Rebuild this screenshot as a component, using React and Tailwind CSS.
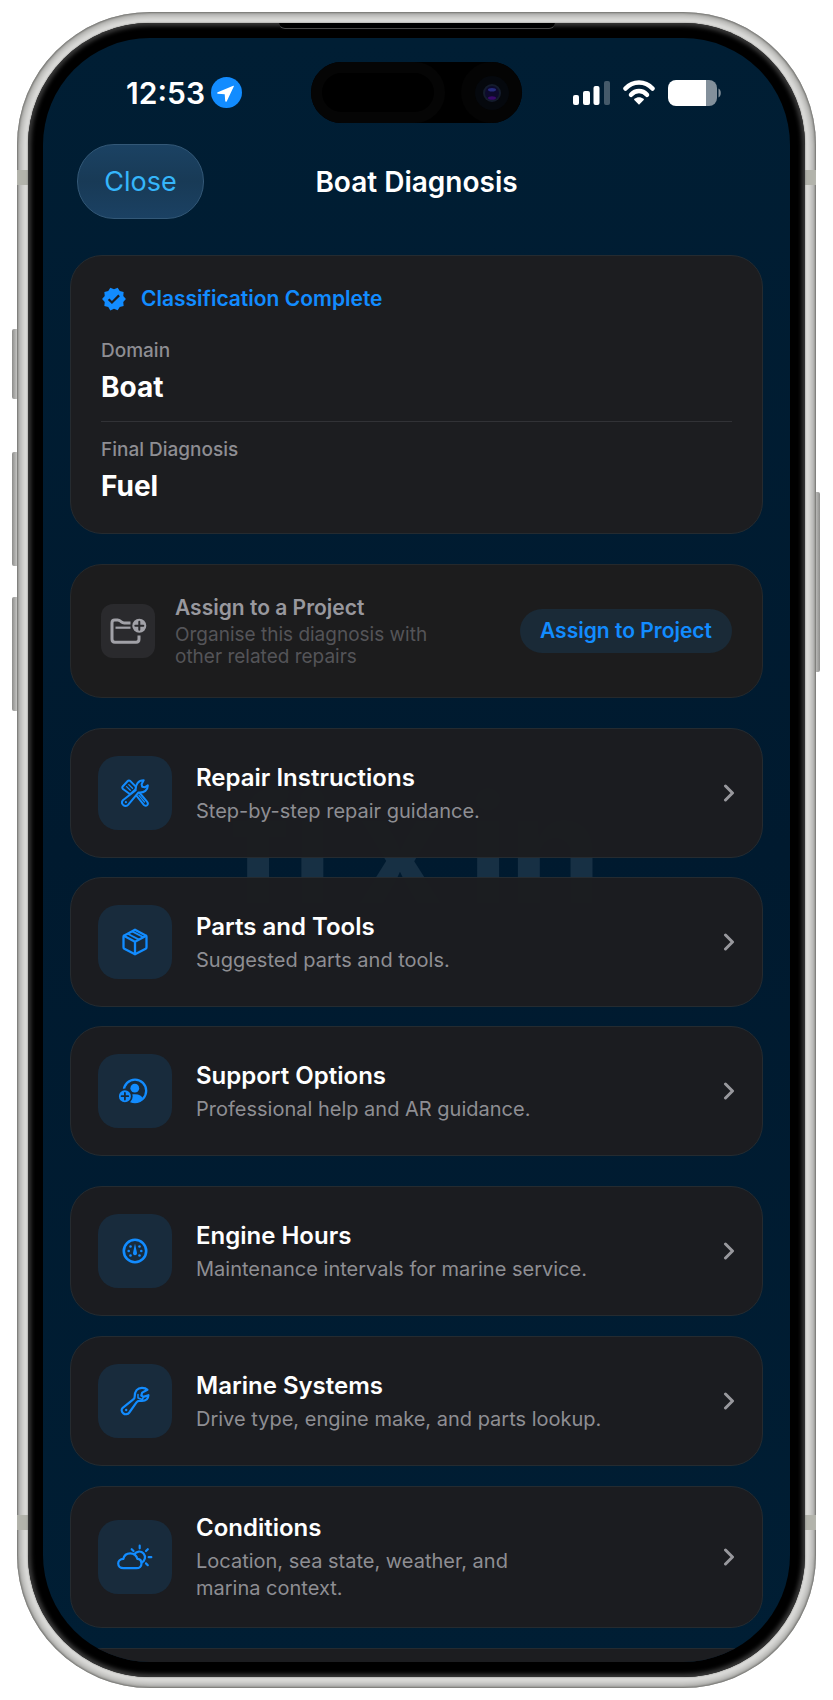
import React from "react";
import { MdVerified } from "react-icons/md";

const FolderPlusIcon = () => (
  <svg width="38" height="28" viewBox="0 0 38 28" fill="none">
    <path
      d="M21.5 6H15.2c-1.2 0-2-.3-2.9-1.1l-1-.9c-.8-.8-1.5-1.1-2.7-1.1H5.8C3.9 2.9 3 3.9 3 5.7V22.3c0 1.9 1 2.9 2.9 2.9H27.1c1.9 0 2.9-1 2.9-2.9V18.5"
      stroke="#a1a1a7"
      strokeWidth="3"
    />
    <path d="M6.5 10.7H21.5" stroke="#a1a1a7" strokeWidth="2.2" />
    <circle cx="30.3" cy="8.7" r="7" fill="#a1a1a7" />
    <path
      d="M30.3 4.700v8M26.300 8.700h8"
      stroke="#2a2a2d"
      strokeWidth="2"
      strokeLinecap="round"
    />
  </svg>
);

const RepairIcon = () => (
  <svg
    width="28"
    height="28"
    viewBox="0 0 28 28"
    fill="none"
    stroke="#128cff"
    strokeWidth="2"
    strokeLinecap="round"
    strokeLinejoin="round"
  >
    {/* Screwdriver */}
    <path d="M14.5 15.5 17.5 12.5 26 22.6c1.1 1.3 1 2.6.2 3.5-.9.9-2.4.9-3.400-.2Z" />
    <path d="M17.8 16.2 23.5 23" strokeWidth="1.200" />
    <path d="M1.9 7.2 6.5 2.2c.8-.9 2-.9 2.9-.1l5.2 5.3c.9.9.9 1.8.1 2.7L10.300 14.300c-.8.8-1.800.8-2.600 0L2 10c-.9-.9-.9-1.900-.1-2.800Z" />
    <path d="M5.6 7.6 9.3 11.2M7.8 5.6 11.5 9.2" strokeWidth="1.300" />
    {/* Wrench */}
    <path
      fill="#182b3c"
      d="M1.9 21.3 14.7 11.3C14.3 5.5 17.3 1.3 22.7 1.3L20.6 5.2 21.2 7.7 23.7 8.3 26.8 6.3C27.1 11 23.2 14 17.5 13.4L7.3 25.7C5.900 27.300 3.700 27.300 2.200 25.900.8 24.500.6 22.600 1.900 21.300Z"
    />
    <circle cx="4.900" cy="23.200" r="1.100" fill="#128cff" stroke="none" />
  </svg>
);

const BoxIcon = () => (
  <svg
    width="26"
    height="28"
    viewBox="0 0 26 28"
    fill="none"
    stroke="#128cff"
    strokeWidth="2.300"
    strokeLinejoin="round"
  >
    <path d="M13 1.7 23.7 7.4c.6.3.8.7.8 1.3V19.3c0 .7-.2 1.100-.8 1.400L13 26.300 2.300 20.700c-.6-.3-.8-.7-.8-1.400V8.700c0-.6.2-1 .8-1.300Z" />
    <path d="M1.8 7.8 13 13.7 24.2 7.8M13 13.7V26" />
    <path d="M5.7 5.7 17 11.6M10.2 3.4 21.5 9.3" strokeWidth="1.800" />
  </svg>
);

const SupportIcon = () => (
  <svg width="34" height="26" viewBox="0 0 34 26" fill="none">
    <circle cx="17" cy="12.800" r="11.200" stroke="#128cff" strokeWidth="2.300" />
    <circle cx="16.800" cy="10.200" r="4.400" fill="#128cff" />
    <path
      d="M8.5 21.5C9.5 18 12.5 16.3 16.9 16.3S24 17.8 25.3 21.2C22.5 25.5 12 25.5 8.5 21.5Z"
      fill="#128cff"
    />
    <circle cx="6.900" cy="18.200" r="6.900" fill="#128cff" stroke="#182b3c" strokeWidth="1.800" />
    <path d="M6.9 14.900v6.600M3.600 18.200h6.600" stroke="#182b3c" strokeWidth="1.800" strokeLinecap="round" />
  </svg>
);

const GaugeIcon = () => (
  <svg width="26" height="26" viewBox="0 0 26 26" fill="#128cff">
    <circle cx="13" cy="13" r="11.200" fill="none" stroke="#128cff" strokeWidth="2.600" />
    <path d="M13 5.500 11.100 14.600a2 2 0 1 0 3.800 0Z" />
    <circle cx="8.500" cy="8.500" r="1.300" />
    <circle cx="17.500" cy="8.500" r="1.300" />
    <circle cx="6.700" cy="13" r="1.300" />
    <circle cx="19.300" cy="13" r="1.300" />
    <circle cx="8.500" cy="17.500" r="1.300" />
    <circle cx="17.500" cy="17.500" r="1.300" />
  </svg>
);

const WrenchIcon = () => (
  <svg
    width="30"
    height="30"
    viewBox="0 0 30 30"
    fill="none"
    stroke="#128cff"
    strokeWidth="2.200"
    strokeLinecap="round"
    strokeLinejoin="round"
  >
    <path d="M2.7 21.8 13.6 13.2C14.5 12.4 14.7 11.8 14.7 10.5 14.7 5 17.3 1.8 22 1.8c2.5 0 4.3.7 5.4 2L22.2 6.6 21.3 9.5 23.4 10.9 28.4 9.2C28.2 12.8 25.7 14.9 22 14.9H19.3C18 14.9 17.3 15.3 16.5 16.4L9.3 26.5c-1.5 2-4.1 2.3-6 .8C1.3 25.7 1.1 23.3 2.7 21.8Z" />
    <path d="M18 8.500V12M18 12 22.500 13.500 23.400 10.900" strokeWidth="1.500" />
    <circle cx="6.200" cy="24" r="1.200" fill="#128cff" stroke="none" />
  </svg>
);

const WeatherIcon = () => (
  <svg
    width="36"
    height="26"
    viewBox="0 0 36 26"
    fill="none"
    stroke="#128cff"
    strokeWidth="2.200"
    strokeLinecap="round"
    strokeLinejoin="round"
  >
    <path d="M17.3 10.2a5.8 5.8 0 1 1 7.3 8.4" />
    <path d="M22.700 1.700v2.600M30.800 5.200 29 7M34.300 13.200h-2.600M30.800 21.200 29 19.400M14.700 5.200 16.500 7" />
    <path d="M6.5 24.2H19.5c3 0 5-2 5-4.8 0-2.5-1.7-4.300-4.100-4.500C19.500 11.500 16.800 9.300 13.200 9.300 9.600 9.300 7 11.600 6.300 14.900 3.300 15 1.200 17 1.200 19.600c0 2.600 2.100 4.600 5.300 4.600Z" />
  </svg>
);

const ChevronIcon = () => (
  <svg
    width="12"
    height="18"
    viewBox="0 0 12 18"
    fill="none"
    stroke="#98989d"
    strokeWidth="3"
    strokeLinecap="round"
    strokeLinejoin="round"
    className="shrink-0"
  >
    <path d="M2.500 2 9.500 9 2.500 16" />
  </svg>
);

const guides = [
  {
    title: "Repair Instructions",
    text: "Step-by-step repair guidance.",
    icon: <RepairIcon />,
  },
  {
    title: "Parts and Tools",
    text: "Suggested parts and tools.",
    icon: <BoxIcon />,
  },
  {
    title: "Support Options",
    text: "Professional help and AR guidance.",
    icon: <SupportIcon />,
  },
];

const marine = [
  {
    title: "Engine Hours",
    text: "Maintenance intervals for marine service.",
    icon: <GaugeIcon />,
  },
  {
    title: "Marine Systems",
    text: "Drive type, engine make, and parts lookup.",
    icon: <WrenchIcon />,
  },
  {
    title: "Conditions",
    text: "Location, sea state, weather, and\nmarina context.",
    icon: <WeatherIcon />,
  },
];

const MenuCard = ({ title, text, icon }) => (
  <button
    type="button"
    className="flex w-full min-h-[130px] items-center gap-6 rounded-[32px] border border-[#252b30] bg-[#1c1d20]/98 px-[27px] py-[25px] text-left"
  >
    <span className="flex size-[74px] shrink-0 items-center justify-center rounded-[20px] bg-[#182b3c]">
      {icon}
    </span>
    <span className="flex flex-1 flex-col gap-1">
      <span className="text-[24px] leading-[32px] font-semibold text-white">
        {title}
      </span>
      <span className="whitespace-pre-line text-[20px] leading-[27px] text-[#8e8e93]">
        {text}
      </span>
    </span>
    <ChevronIcon />
  </button>
);

const StatusBar = () => (
  <div className="grid h-[61px] grid-cols-[1fr_auto_1fr] items-center">
    {/* Time and location */}
    <div className="flex items-center justify-end gap-[6px] pr-[69px]">
      <span className="text-[30px] leading-[32px] font-semibold text-white">
        12:53
      </span>
      <svg width="31" height="31" viewBox="0 0 31 31" className="shrink-0">
        <circle cx="15.500" cy="15.500" r="15.500" fill="#128cff" />
        <path
          d="M22.3 8.7 6.7 15.2c-.9.4-.8 1.4.2 1.5l6.8.5.5 6.8c.1 1 1.2 1.1 1.6.2L22.9 9.300c.2-.5-.1-.8-.6-.6Z"
          fill="#fff"
        />
      </svg>
    </div>

    {/* Camera island */}
    <div className="flex h-[61px] w-[211px] items-center justify-between rounded-full bg-black">
      <div className="h-[61px] w-[134px] rounded-full border-[11px] border-[#050505] bg-black" />
      <div className="flex size-[61px] items-center justify-center rounded-full bg-[#040404]">
        <div className="flex size-[34px] items-center justify-center rounded-full bg-[#05080d]">
          <svg width="18" height="18" viewBox="0 0 18 18">
            <circle cx="9" cy="9" r="9" fill="#141c2c" />
            <circle cx="9" cy="9" r="7" fill="#0d0a2c" />
            <ellipse cx="9" cy="5.800" rx="4" ry="1.800" fill="#252b7c" />
            <ellipse cx="9" cy="14" rx="4" ry="1.800" fill="#380a69" />
          </svg>
        </div>
      </div>
    </div>

    {/* Signal, wifi, battery */}
    <div className="flex items-center gap-[13px] pl-[51px]">
      <svg width="37" height="24" viewBox="0 0 37 24" fill="#fff">
        <rect x="0" y="14" width="6" height="10" rx="2" />
        <rect x="10" y="10" width="7" height="14" rx="2" />
        <rect x="20.500" y="5" width="6" height="19" rx="2" />
        <rect x="31" y="0" width="6" height="24" rx="2" opacity="0.270" />
      </svg>
      <svg width="32" height="25" viewBox="0 0 32 25" fill="none" stroke="#fff">
        <path d="M2.500 8.500C10 .5 22 .5 29.500 8.500" strokeWidth="4.500" strokeLinecap="round" />
        <path d="M8 14.800c4.500-5 11.500-5 16 0" strokeWidth="4.500" strokeLinecap="round" />
        <path d="M16 24.700 11.300 20c-.4-.5-.3-.9.1-1.2 2.7-2.2 6.5-2.2 9.2 0 .4.3.5.7.1 1.2Z" fill="#fff" stroke="none" />
      </svg>
      <svg width="54" height="26" viewBox="0 0 54 26">
        <path d="M8 0H38V26H8a8 8 0 0 1-8-8V8a8 8 0 0 1 8-8Z" fill="#fff" />
        <path d="M38 0H41a8 8 0 0 1 8 8V18a8 8 0 0 1-8 8H38Z" fill="#83909b" />
        <path d="M50.500 8.500c3 1 3 8 0 9Z" fill="#83909b" />
      </svg>
    </div>
  </div>
);

const Header = () => (
  <header className="mt-[21px] grid grid-cols-[1fr_auto_1fr] items-center px-[34px]">
    <button
      type="button"
      className="h-[75px] w-[127px] rounded-[37px] border border-[#335877] bg-gradient-to-b from-[#1b4263] via-[#183a56] to-[#1b4163] text-[27px] leading-[32px] text-[#35b6fb]"
    >
      Close
    </button>
    <h1 className="text-[28px] leading-[32px] font-semibold text-white">
      Boat Diagnosis
    </h1>
    <span />
  </header>
);

const SummaryCard = () => (
  <section className="rounded-[32px] border border-[#252b30] bg-[#1c1d20] p-[30px]">
    <div className="flex h-[26px] items-center gap-[14px] text-[#128cff]">
      <MdVerified size={26} />
      <h2 className="text-[21px] leading-[26px] font-semibold">
        Classification Complete
      </h2>
    </div>
    <dl className="mt-[27px]">
      <dt className="text-[19px] leading-[24px] font-medium text-[#8e8e93]">
        Domain
      </dt>
      <dd className="mt-[7px] text-[28px] leading-[34px] font-bold text-white">
        Boat
      </dd>
      <div className="mt-[17px] mb-4 h-px bg-[#313236]" />
      <dt className="text-[19px] leading-[24px] font-medium text-[#8e8e93]">
        Final Diagnosis
      </dt>
      <dd className="mt-[7px] text-[28px] leading-[34px] font-bold text-white">
        Fuel
      </dd>
    </dl>
  </section>
);

const ProjectCard = () => (
  <section className="flex min-h-[134px] items-center rounded-[32px] border border-[#25292c] bg-[#1c1c1d] px-[30px]">
    <span className="flex size-[54px] shrink-0 items-center justify-center rounded-[12px] bg-[#2a2a2d]">
      <FolderPlusIcon />
    </span>
    <div className="ml-[20px] flex flex-1 flex-col gap-[3px]">
      <h2 className="text-[21px] leading-[26px] font-semibold text-[#98989e]">
        Assign to a Project
      </h2>
      <p className="text-[19px] leading-[22px] text-[#545458]">
        Organise this diagnosis with
        <br />
        other related repairs
      </p>
    </div>
    <button
      type="button"
      className="h-[44px] shrink-0 rounded-full bg-[#1a2a37] px-5 text-[21px] leading-[26px] font-semibold text-[#128cff]"
    >
      Assign to Project
    </button>
  </section>
);

const App = () => {
  return (
    <div className="bg-white px-[17px] pt-[12px] pb-[12px] font-['Inter',sans-serif]">
      <div className="relative">
        {/* Side buttons */}
        <div className="absolute top-[317px] -left-[5px] h-[70px] w-[7px] rounded-l-[2px] bg-gradient-to-r from-[#8d8d8b] to-[#dcdcda]" />
        <div className="absolute top-[440px] -left-[5px] h-[114px] w-[7px] rounded-l-[2px] bg-gradient-to-r from-[#8d8d8b] to-[#dcdcda]" />
        <div className="absolute top-[585px] -left-[5px] h-[114px] w-[7px] rounded-l-[2px] bg-gradient-to-r from-[#8d8d8b] to-[#dcdcda]" />
        <div className="absolute top-[480px] -right-[4px] h-[180px] w-[7px] rounded-r-[2px] bg-gradient-to-l from-[#8d8d8b] to-[#dcdcda]" />

        {/* Metal frame */}
        <div className="relative rounded-[133px] bg-[#dededc] p-[11px] shadow-[inset_0_0_2px_1px_#72726f,inset_0_0_6px_4px_#a5a5a2]">
          <div className="absolute top-[158px] left-0 h-[15px] w-[11px] bg-[#b2b3ab]" />
          <div className="absolute top-[158px] right-0 h-[15px] w-[11px] bg-[#b2b3ab]" />
          <div className="absolute bottom-[158px] left-0 h-[15px] w-[11px] bg-[#b2b3ab]" />
          <div className="absolute right-0 bottom-[158px] h-[15px] w-[11px] bg-[#b2b3ab]" />

          {/* Bezel */}
          <div className="relative rounded-[122px] bg-black p-[15px] shadow-[0_0_2px_0_#70706e,inset_0_0_4px_3px_#3a3a3a]">
            <div className="absolute top-0 left-1/2 h-[6px] w-[276px] -translate-x-1/2 rounded-b-[6px] border-b border-[#4a4a4a] bg-black" />

            {/* Screen */}
            <div className="relative isolate overflow-hidden rounded-[107px] bg-gradient-to-b from-[#001e34] via-[#001a2f] to-[#001e34] pt-6">
              {/* Watermark behind the cards */}
              <div
                aria-hidden="true"
                className="absolute top-[721px] left-1/2 -z-10 flex -translate-x-1/2 gap-6 text-[150px] leading-[180px] font-bold text-[#173044]"
              >
                <span>fi</span>
                <span>x</span>
                <span>in</span>
              </div>

              <StatusBar />
              <Header />

              <main className="mt-[36px] flex flex-col gap-[30px] px-[27px]">
                <SummaryCard />
                <ProjectCard />
                <div className="flex flex-col gap-[19px]">
                  {guides.map((item) => (
                    <MenuCard key={item.title} {...item} />
                  ))}
                </div>
                <div className="flex flex-col gap-5">
                  {marine.map((item) => (
                    <MenuCard key={item.title} {...item} />
                  ))}
                  {/* Next card, cut off by the bottom of the screen */}
                  <div className="-mb-[66px] h-[80px] rounded-[32px] border border-[#252b30] bg-[#1c1d20]" />
                </div>
              </main>
            </div>
          </div>
        </div>
      </div>
    </div>
  );
};

export default App;
